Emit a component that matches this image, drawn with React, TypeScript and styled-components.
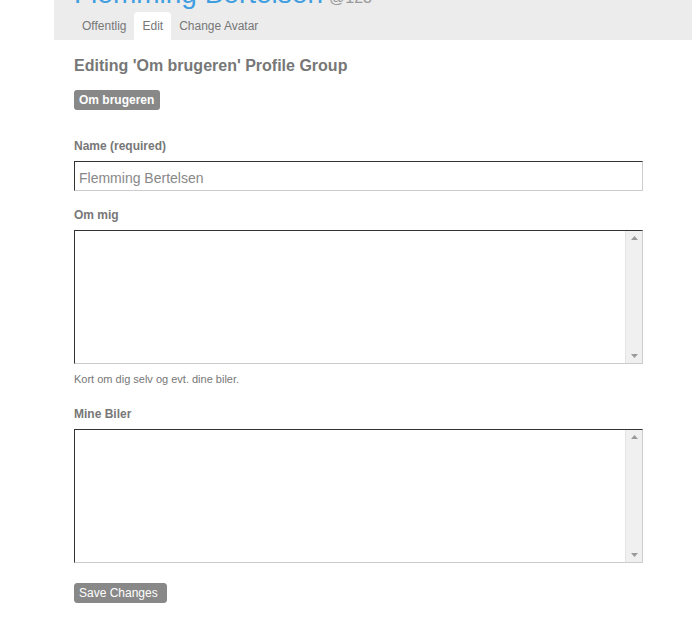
import React from "react";
import styled, { createGlobalStyle } from "styled-components";

const Global = createGlobalStyle`
  html, body { margin: 0; padding: 0; background: #fff; }
  body { font-family: "Liberation Sans", Arial, sans-serif; }
`;

const Page = styled.div`
  width: 692px;
`;

const Header = styled.div`
  margin-left: 54px;
  height: 40px;
  background: #ececec;
  overflow: hidden;
  display: flex;
  flex-direction: column;
  justify-content: space-between;
  padding-left: 20px;
`;

const TitleRow = styled.div`
  display: flex;
  align-items: baseline;
  gap: 6px;
  margin-top: -22px;
  height: 32px;
  line-height: 32px;
`;

const Title = styled.h1`
  margin: 0;
  font-size: 28px;
  font-weight: normal;
  color: #3f9ee0;
`;

const Handle = styled.span`
  font-size: 16px;
  color: #999;
`;

const Tabs = styled.div`
  display: flex;
  height: 28px;
  align-items: stretch;
`;

const Tab = styled.a<{ $active?: boolean }>`
  display: flex;
  align-items: center;
  padding: 0 8px;
  font-size: 12px;
  color: #777;
  text-decoration: none;
  background: ${(p) => (p.$active ? "#fff" : "transparent")};
  border-radius: 4px 4px 0 0;
`;

const Content = styled.div`
  padding: 16px 0 0 74px;
  width: 569px;
`;

const Heading = styled.h2`
  margin: 0;
  font-size: 16px;
  line-height: 20px;
  color: #777;
  font-weight: bold;
`;

const PillRow = styled.div`
  display: flex;
  margin-top: 14px;
`;

const Pill = styled.span`
  background: #888;
  color: #fff;
  font-size: 12px;
  font-weight: bold;
  line-height: 20px;
  padding: 0 6px 0 5px;
  border-radius: 3px;
`;

const Field = styled.div<{ $top: number }>`
  margin-top: ${(p) => p.$top}px;
`;

const Label = styled.label`
  display: block;
  font-size: 12px;
  font-weight: bold;
  color: #777;
  line-height: 16px;
  margin-bottom: 7px;
`;

const TextInput = styled.input`
  box-sizing: border-box;
  display: block;
  width: 569px;
  height: 30px;
  margin: 0;
  padding: 3px 4px 0;
  font-family: "Liberation Sans", Arial, sans-serif;
  font-size: 14px;
  color: #888;
  border-style: solid;
  border-width: 1px;
  border-color: #333 #ccc #ccc #333;
  outline: none;
`;

const AreaBox = styled.div`
  box-sizing: border-box;
  width: 569px;
  height: 134px;
  display: flex;
  border-style: solid;
  border-width: 1px;
  border-color: #333 #ccc #ccc #333;
`;

const Area = styled.textarea`
  flex: 1;
  border: none;
  outline: none;
  resize: none;
  margin: 0;
  padding: 4px;
  font-family: "Liberation Sans", Arial, sans-serif;
  font-size: 13px;
  overflow: hidden;
`;

const ScrollBar = styled.div`
  width: 16px;
  background: #f0f0f0;
  border-left: 1px solid #e4e4e4;
  display: flex;
  flex-direction: column;
  justify-content: space-between;
  align-items: center;
  padding: 5px 0 5px;
`;

const Arrow = styled.svg`
  display: block;
  width: 7px;
  height: 4px;
`;

const Help = styled.div`
  font-size: 11px;
  color: #777;
  margin-top: 9px;
  line-height: 13px;
`;

const SaveButton = styled.button`
  display: block;
  margin-top: 20px;
  background: #888;
  color: #fff;
  border: 1px solid #888;
  border-radius: 3px;
  font-family: "Liberation Sans", Arial, sans-serif;
  font-size: 12px;
  line-height: 18px;
  padding: 0 8px 0 4px;
`;

const ScrollArea = () => (
  <AreaBox>
    <Area />
    <ScrollBar>
      <Arrow viewBox="0 0 7 4">
        <path d="M3.5 0 L7 4 L0 4 Z" fill="#9a9a9a" />
      </Arrow>
      <Arrow viewBox="0 0 7 4">
        <path d="M0 0 L7 0 L3.5 4 Z" fill="#9a9a9a" />
      </Arrow>
    </ScrollBar>
  </AreaBox>
);

export default function App() {
  return (
    <Page>
      <Global />
      <Header>
        <TitleRow>
          <Title>Flemming Bertelsen</Title>
          <Handle>@123</Handle>
        </TitleRow>
        <Tabs>
          <Tab>Offentlig</Tab>
          <Tab $active>Edit</Tab>
          <Tab>Change Avatar</Tab>
        </Tabs>
      </Header>
      <Content>
        <Heading>Editing 'Om brugeren' Profile Group</Heading>
        <PillRow>
          <Pill>Om brugeren</Pill>
        </PillRow>
        <Field $top={28}>
          <Label>Name (required)</Label>
          <TextInput defaultValue="Flemming Bertelsen" />
        </Field>
        <Field $top={16}>
          <Label>Om mig</Label>
          <ScrollArea />
          <Help>Kort om dig selv og evt. dine biler.</Help>
        </Field>
        <Field $top={20}>
          <Label>Mine Biler</Label>
          <ScrollArea />
        </Field>
        <SaveButton>Save Changes</SaveButton>
      </Content>
    </Page>
  );
}
